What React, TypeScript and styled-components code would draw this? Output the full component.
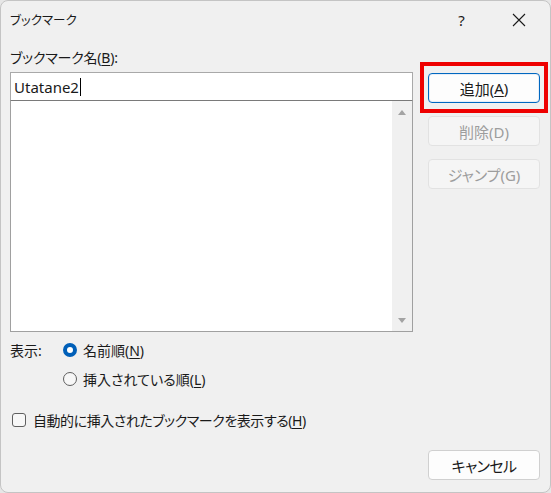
import React from "react";
import styled, { createGlobalStyle } from "styled-components";

const GlobalStyle = createGlobalStyle`
	html, body {
		margin: 0;
		padding: 0;
		background: #e6e6e6;
	}
	body {
		font-family: "Noto Sans", "Noto Sans CJK JP", sans-serif;
		font-feature-settings: "palt";
		color: #1a1a1a;
	}
`;

const Window = styled.div`
	width: 551px;
	height: 493px;
	box-sizing: border-box;
	background: #f0f0f0;
	border: 1px solid #c4c4c4;
	border-radius: 8px;
	display: flex;
	flex-direction: column;
	overflow: hidden;
`;

const TitleBar = styled.div`
	height: 37px;
	display: flex;
	align-items: center;
	padding: 0 3px 0 9px;
	flex-shrink: 0;
`;

const Title = styled.div`
	flex: 1;
	font-size: 12.5px;
	font-family: "Noto Sans CJK JP", sans-serif;
	color: #1a1a1a;
`;

const TitleButton = styled.div`
	width: 57px;
	height: 37px;
	display: flex;
	align-items: center;
	justify-content: center;
	font-size: 15px;
	color: #1a1a1a;
`;

const Body = styled.div`
	flex: 1;
	display: grid;
	grid-template-columns: 403px 112px;
	column-gap: 15px;
	padding: 0 0 12px 9px;
`;

const LeftColumn = styled.div`
	display: flex;
	flex-direction: column;
`;

const FieldLabel = styled.div`
	margin-top: 10px;
	height: 20px;
	line-height: 20px;
	font-size: 14px;
	letter-spacing: -0.2px;
	margin-bottom: 4px;
`;

const Key = styled.span`
	text-decoration: underline;
	text-underline-offset: 2px;
`;

const NameInput = styled.div`
	height: 29px;
	box-sizing: border-box;
	background: #fff;
	border: 1px solid #a9a9a9;
	border-bottom: 1px solid #7a7a7a;
	display: flex;
	align-items: center;
	padding-left: 3px;
	font-size: 15px;
	font-family: "Noto Sans", sans-serif;
`;

const Caret = styled.span`
	display: inline-block;
	width: 1px;
	height: 18px;
	background: #000;
	margin-left: 1px;
`;

const ListBox = styled.div`
	height: 231px;
	box-sizing: border-box;
	background: #fff;
	border: 1px solid #a0a0a0;
	border-top: none;
	display: flex;
	justify-content: flex-end;
`;

const ScrollBar = styled.div`
	width: 20px;
	background: #f0f0f0;
	display: flex;
	flex-direction: column;
	justify-content: space-between;
	align-items: center;
	padding: 9px 0 8px;
`;

const Arrow = styled.div<{ $down?: boolean }>`
	width: 0;
	height: 0;
	border-left: 4px solid transparent;
	border-right: 4px solid transparent;
	${(p) =>
		p.$down
			? "border-top: 5px solid #a3a3a3;"
			: "border-bottom: 5px solid #a3a3a3;"}
`;

const OptionRow = styled.div<{ $indent?: boolean; $gap?: number; $tight?: boolean }>`
	display: flex;
	align-items: center;
	height: 22px;
	margin-top: ${(p) => p.$gap ?? 7}px;
	padding-left: ${(p) => (p.$indent ? 53 : 0)}px;
	font-size: 14px;
	letter-spacing: ${(p) => (p.$tight ? -0.45 : 0)}px;
`;

const ShowLabel = styled.div`
	width: 53px;
`;

const Radio = styled.span<{ $checked?: boolean }>`
	width: 14px;
	height: 14px;
	box-sizing: border-box;
	border-radius: 50%;
	margin-right: 6px;
	${(p) =>
		p.$checked
			? "background: #fff; border: 4px solid #005fb8;"
			: "background: #f7f7f7; border: 1px solid #5f5f5f;"}
`;

const CheckBox = styled.span`
	width: 14px;
	height: 14px;
	box-sizing: border-box;
	border: 1px solid #5f5f5f;
	border-radius: 3px;
	background: #f7f7f7;
	margin: 0 7px 0 2px;
`;

const RightColumn = styled.div`
	display: flex;
	flex-direction: column;
	gap: 13px;
	padding-top: 35px;
`;

const Button = styled.div<{ $primary?: boolean; $disabled?: boolean }>`
	height: 30px;
	box-sizing: border-box;
	border-radius: 4px;
	display: flex;
	align-items: center;
	justify-content: center;
	font-size: 15px;
	background: ${(p) => (p.$disabled ? "#f5f5f5" : "#fdfdfd")};
	color: ${(p) => (p.$disabled ? "#9d9d9d" : "#1a1a1a")};
	border: 1px solid
		${(p) => (p.$primary ? "#0067c0" : p.$disabled ? "#e2e2e2" : "#d0d0d0")};
	${(p) => (p.$primary ? "box-shadow: inset 0 0 0 1px #e6eef8;" : "")}
`;

const Highlight = styled.div`
	position: relative;
	&::after {
		content: "";
		position: absolute;
		left: -8px;
		right: -8px;
		top: -11px;
		bottom: -10px;
		border: 4px solid #ee0000;
		pointer-events: none;
	}
`;

const CancelButton = styled(Button)`
	margin-top: auto;
	letter-spacing: -0.6px;
`;

export default function App() {
	return (
		<>
			<GlobalStyle />
			<Window>
				<TitleBar>
					<Title>ブックマーク</Title>
					<TitleButton>?</TitleButton>
					<TitleButton>
						<svg width="14" height="14" viewBox="0 0 14 14">
							<path d="M1 1 L13 13 M13 1 L1 13" stroke="#1a1a1a" strokeWidth="1.1" />
						</svg>
					</TitleButton>
				</TitleBar>
				<Body>
					<LeftColumn>
						<FieldLabel>
							ブックマーク名(<Key>B</Key>):
						</FieldLabel>
						<NameInput>
							Utatane2
							<Caret />
						</NameInput>
						<ListBox>
							<ScrollBar>
								<Arrow />
								<Arrow $down />
							</ScrollBar>
						</ListBox>
						<OptionRow $gap={7}>
							<ShowLabel>表示:</ShowLabel>
							<Radio $checked />
							名前順(<Key>N</Key>)
						</OptionRow>
						<OptionRow $indent>
							<Radio />
							挿入されている順(<Key>L</Key>)
						</OptionRow>
						<OptionRow $gap={19} $tight>
							<CheckBox />
							自動的に挿入されたブックマークを表示する(<Key>H</Key>)
						</OptionRow>
					</LeftColumn>
					<RightColumn>
						<Highlight>
							<Button $primary>
								追加(<Key>A</Key>)
							</Button>
						</Highlight>
						<Button $disabled>削除(D)</Button>
						<Button $disabled>ジャンプ(G)</Button>
						<CancelButton>キャンセル</CancelButton>
					</RightColumn>
				</Body>
			</Window>
		</>
	);
}
